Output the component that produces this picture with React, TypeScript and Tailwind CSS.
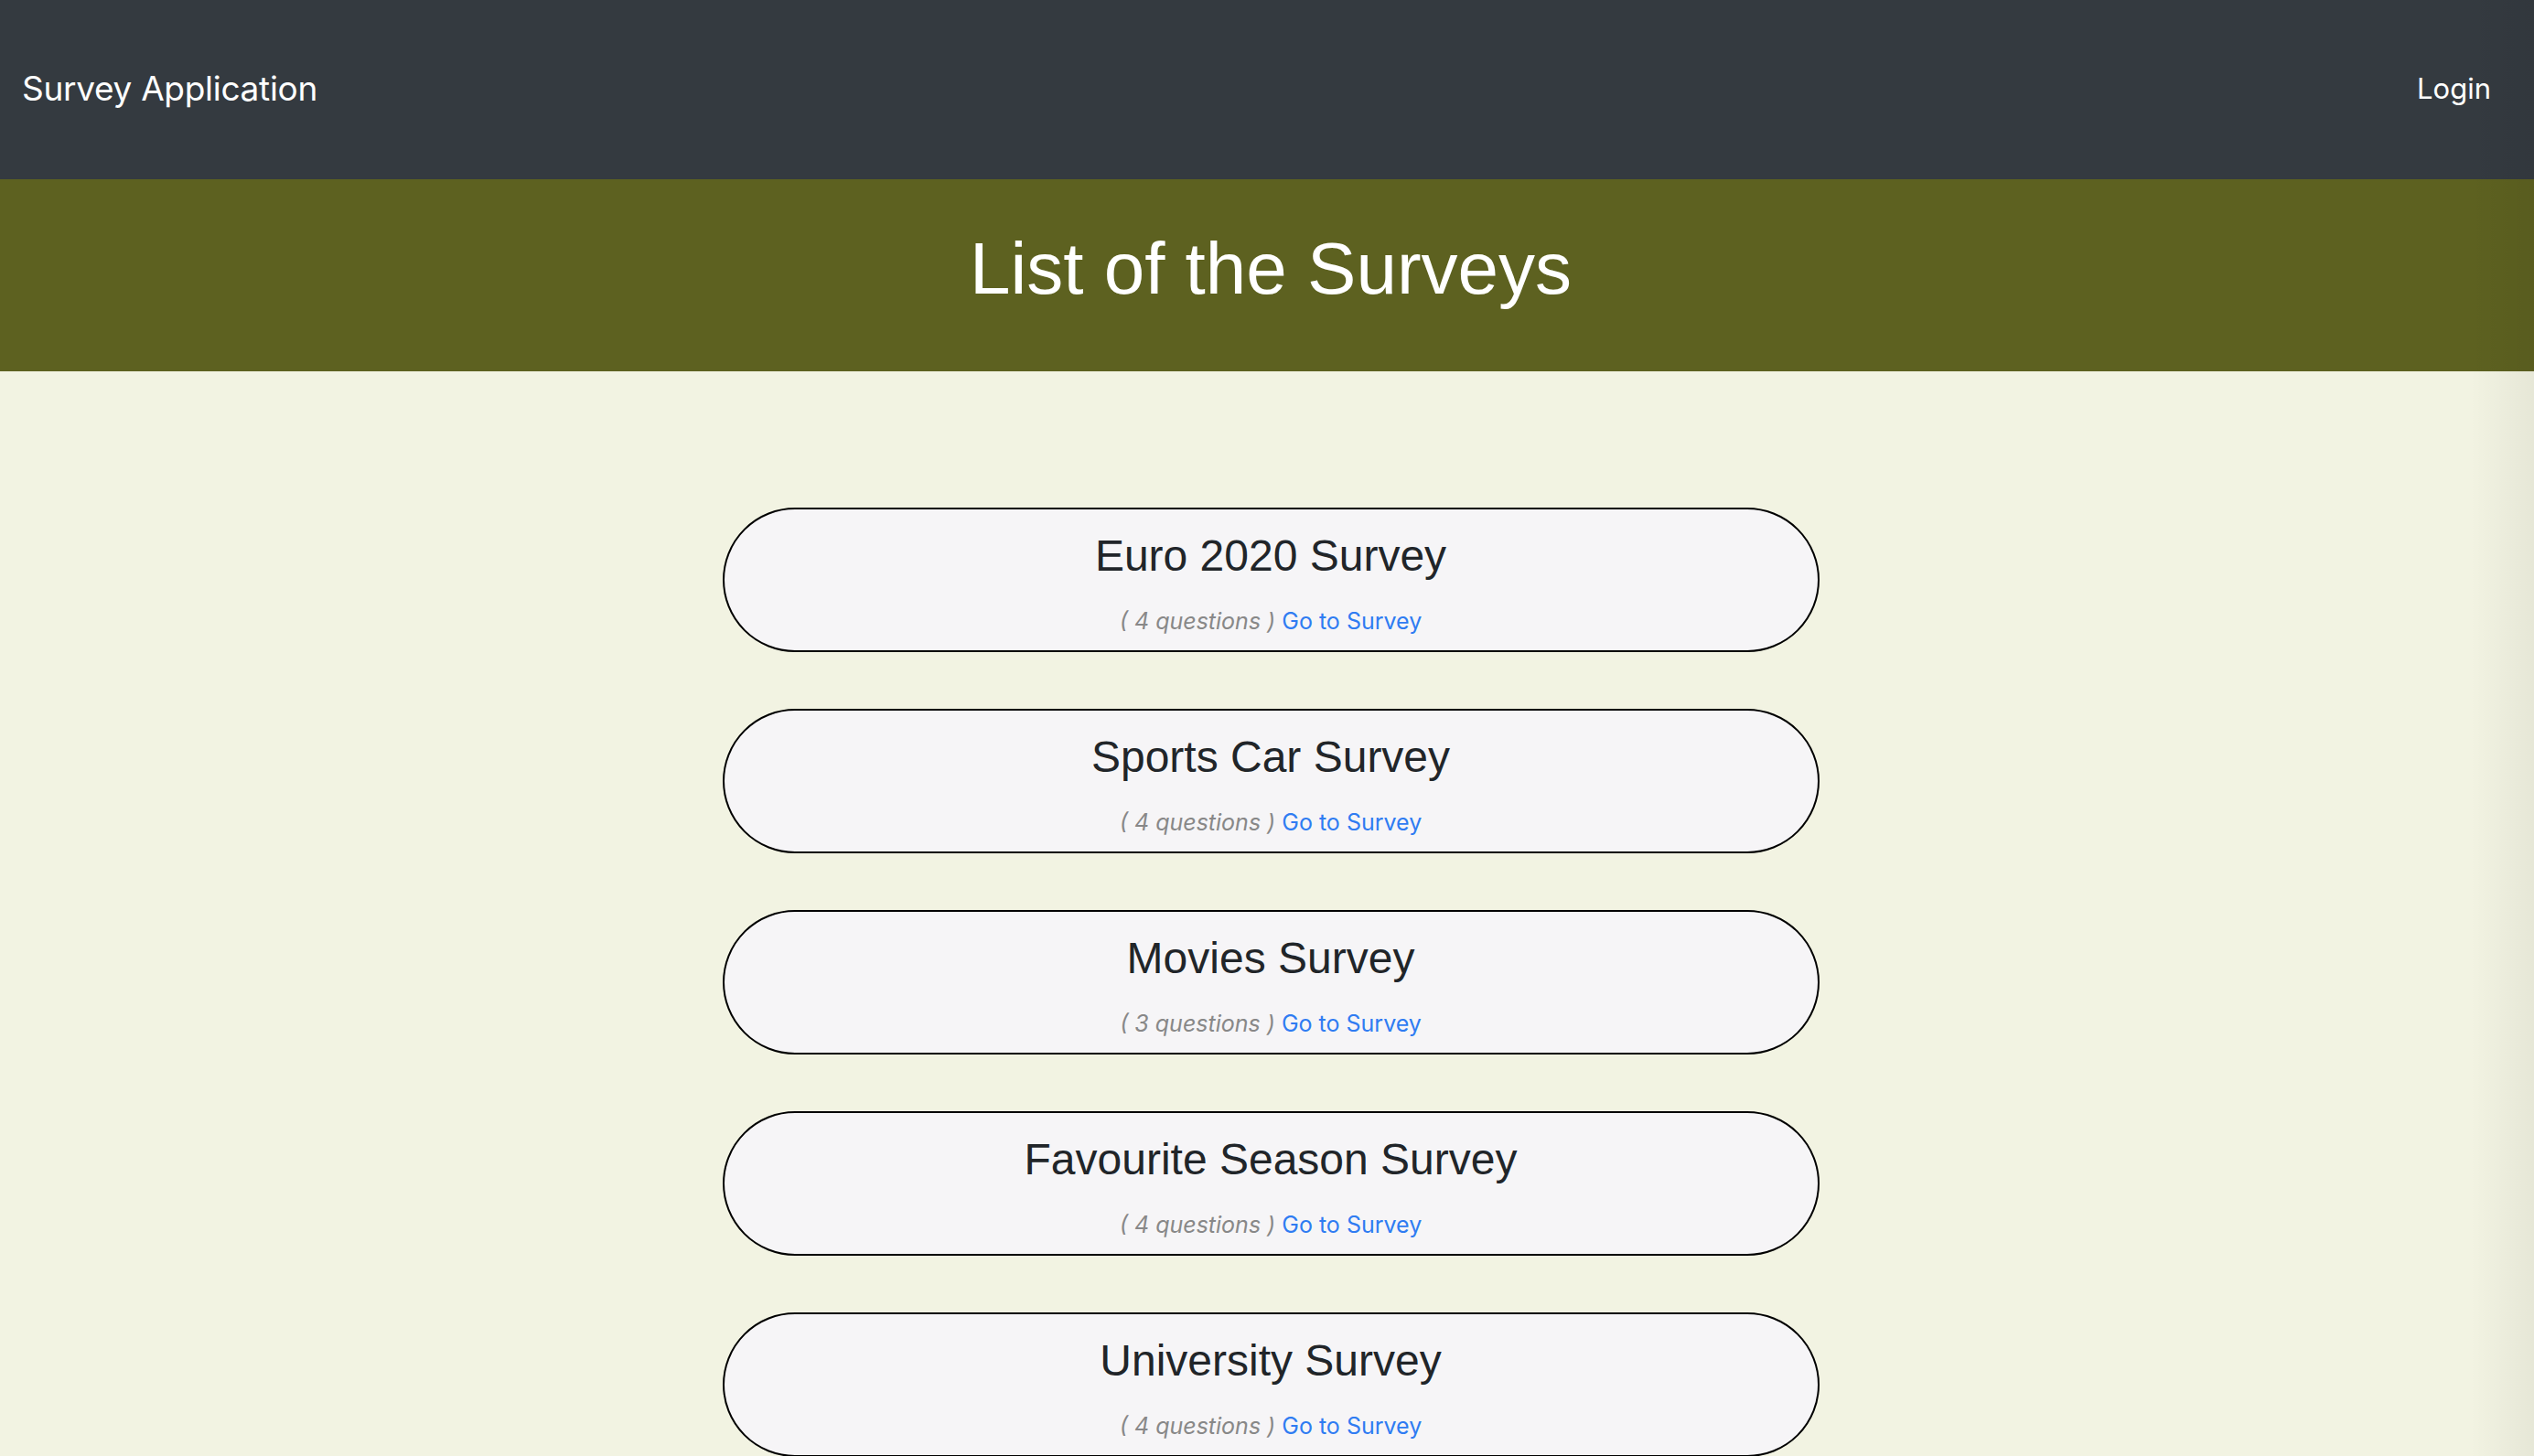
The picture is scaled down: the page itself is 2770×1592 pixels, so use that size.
import React from "react";

// SURVEY DATA

interface Survey {
    title: string;
    questions: number;
}

const surveys: Survey[] = [
    { title: "Euro 2020 Survey", questions: 4 },
    { title: "Sports Car Survey", questions: 4 },
    { title: "Movies Survey", questions: 3 },
    { title: "Favourite Season Survey", questions: 4 },
    { title: "University Survey", questions: 4 },
];

const sysFont = "font-['Inter','Noto_Sans',sans-serif]";
const helv = "font-['Liberation_Sans','Arial',sans-serif]";

export default function App() {
    return (
        <div className="relative h-[1592px] bg-[#f2f3e2] overflow-hidden">
            {/* NAVBAR */}
            <nav className={`h-[196px] bg-[#343a40] flex items-center justify-between pl-[24px] pr-[47px] pb-[4px] ${sysFont}`}>
                <a href="#" className="text-white text-[37px] leading-none tracking-[-0.3px]">Survey Application</a>
                <a href="#" className="text-white text-[31px] leading-none">Login</a>
            </nav>

            {/* HEADER */}
            <header className="h-[210px] bg-[#5d6120] flex items-center justify-center pl-2 pb-[14px]">
                <h1 className={`text-white text-[80px] leading-none ${helv}`}>List of the Surveys</h1>
            </header>

            {/* LIST */}
            <main className="flex flex-col items-center gap-[62px] pt-[149px] pl-2">
                {surveys.map((s, i) => (
                    <div key={i} className="w-[1199px] h-[158px] shrink-0 border-2 border-black rounded-full bg-[#f6f5f7] flex flex-col items-center">
                        <h2 className={`pt-[27px] text-[48px] leading-[48px] text-[#212529] ${helv}`}>{s.title}</h2>
                        <p className={`mt-[34px] text-[25px] leading-[26px] ${sysFont}`}>
                            <span className="italic text-[#888888]">( {s.questions} questions )</span>{" "}
                            <a href="#" className="text-[#2f7cf2]">Go to Survey</a>
                        </p>
                    </div>
                ))}
            </main>

            {/* right edge shade */}
            <div className="pointer-events-none absolute top-0 right-0 h-full w-[70px] bg-gradient-to-r from-transparent to-black/5" />
        </div>
    );
}
